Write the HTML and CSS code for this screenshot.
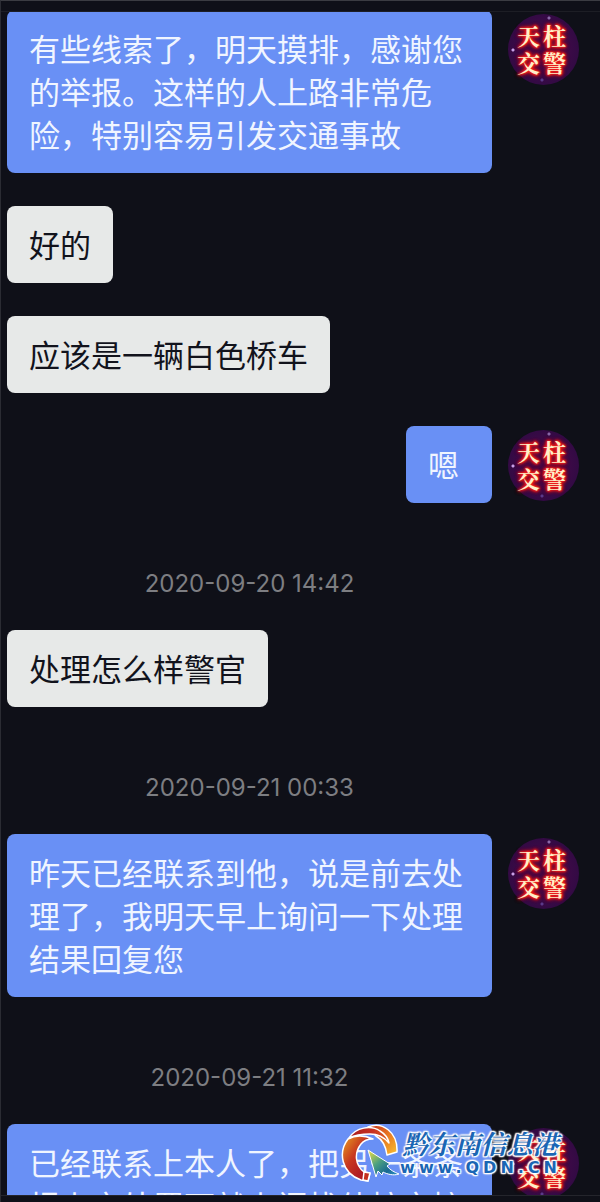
FILE: index.html
```html
<!DOCTYPE html>
<html lang="zh-CN">
  <head>
    <meta charset="UTF-8" />
    <meta name="viewport" content="width=device-width, initial-scale=1.0" />
    <title>天柱交警</title>
    <link rel="stylesheet" href="styles.css">
  </head>
  <body>
    <main class="chat">
      <div class="messages">
        <div class="row reply">
          <p class="bubble">有些线索了，明天摸排，感谢您的举报。这样的人上路非常危险，特别容易引发交通事故</p>
          <div class="avatar"><span>天</span><span>柱</span><span>交</span><span>警</span></div>
        </div>
        <div class="row">
          <p class="bubble light">好的</p>
        </div>
        <div class="row">
          <p class="bubble light">应该是一辆白色桥车</p>
        </div>
        <div class="row reply">
          <p class="bubble">嗯</p>
          <div class="avatar"><span>天</span><span>柱</span><span>交</span><span>警</span></div>
        </div>
        <time class="date">2020-09-20 14:42</time>
        <div class="row">
          <p class="bubble light">处理怎么样警官</p>
        </div>
        <time class="date">2020-09-21 00:33</time>
        <div class="row reply">
          <p class="bubble">昨天已经联系到他，说是前去处理了，我明天早上询问一下处理结果回复您</p>
          <div class="avatar"><span>天</span><span>柱</span><span>交</span><span>警</span></div>
        </div>
        <time class="date">2020-09-21 11:32</time>
        <div class="row reply">
          <p class="bubble">已经联系上本人了，把另一条条报上交处置下就上门找他核交接</p>
          <div class="avatar"><span>天</span><span>柱</span><span>交</span><span>警</span></div>
        </div>
      </div>
    </main>

    <div class="watermark">
      <svg class="logo" viewBox="0 0 60 60" width="60" height="60" aria-hidden="true">
        <defs>
          <linearGradient id="left" x1="0" y1="0" x2="1" y2="1">
            <stop offset="0" stop-color="#e8a020" />
            <stop offset="0.4" stop-color="#c83820" />
            <stop offset="0.7" stop-color="#b01c24" />
          </linearGradient>
          <linearGradient id="top" x1="0" y1="0" x2="1" y2="0">
            <stop offset="0" stop-color="#a81c20" />
            <stop offset="0.6" stop-color="#c83020" />
            <stop offset="1" stop-color="#e06820" />
          </linearGradient>
          <linearGradient id="right" x1="0" y1="0" x2="1" y2="1">
            <stop offset="0" stop-color="#c42c20" />
            <stop offset="0.5" stop-color="#e87820" />
            <stop offset="1" stop-color="#f8c030" />
          </linearGradient>
          <linearGradient id="arrow" x1="0" y1="0" x2="1" y2="1">
            <stop offset="0" stop-color="#f4e040" />
            <stop offset="0.4" stop-color="#4ca080" />
            <stop offset="0.7" stop-color="#186890" />
            <stop offset="1" stop-color="#38a0d8" />
          </linearGradient>
        </defs>
        <g stroke="#fff" stroke-width="1.5" stroke-linejoin="round">
          <path fill="url(#right)" d="M28 4C42 -2 58 9 57 29L47 32C46 24 43 17 36 13Z" />
          <path fill="url(#left)" d="M8 16C-2 29 1 50 21 57L28 58L30 50L24 49C15 42 14 30 21 21C24 17 28 16 33 16C24 12 15 12 8 16Z" />
          <path fill="url(#top)" d="M9 15C16 4 31 2 40 8C45 11 48 15 49 20C44 14 37 11 30 11C22 11 15 12 9 15Z" />
          <path fill="#c43020" d="M24 49L30 50L28 58L23 57Z" />
          <path fill="url(#arrow)" stroke-width="1" d="M28 27L50 41L47 43C50 47 54 49 59 51C53 53 47 51 43 49L42 52L38 48L36 54Z" />
        </g>
      </svg>
      <div class="brand">
        <span class="name">黔东南信息港</span>
        <a class="site" href="#">www.QDN.CN</a>
      </div>
    </div>
  </body>
</html>
```

FILE: styles.css
```css
* {
  box-sizing: border-box;
}
body {
  margin: 0;
  height: 100vh;
  overflow: hidden;
  position: relative;
  background-color: #0f1018;
  border-top: 1px solid #3b3c42;
  border-left: 1px solid #2b2c33;
  font-family: "Noto Sans CJK SC", sans-serif;
  font-size: 31px;
  line-height: 43px;
}
.chat {
  height: calc(100vh - 17px);
  margin-top: 10px;
  overflow: hidden;
  border-top: 1px solid #1d1e25;
  border-bottom: 1px solid #24252c;
}
.messages {
  margin-top: -2px;
  padding: 0 21px 0 6px;
}
.row {
  display: flex;
  align-items: flex-start;
  gap: 16px;
  padding-right: 87px;
  margin-bottom: 33px;
}
.reply {
  justify-content: flex-end;
  padding-right: 0;
}
.bubble {
  margin: 0;
  min-width: 86px;
  padding: 16px 22px 18px;
  border-radius: 8px;
  background-color: #6990f5;
  color: #f0f5ff;
}
.light {
  background-color: #e7e9e8;
  color: #12131c;
}
.avatar {
  flex: none;
  display: grid;
  grid-template-columns: 26px 26px;
  grid-auto-rows: 27px;
  place-content: center;
  width: 71px;
  height: 71px;
  margin-top: 4px;
  padding: 0 4px 2px 0;
  border-radius: 50%;
  background:
    radial-gradient(circle at 41px 4px, #8a68a8 1px, transparent 2px),
    radial-gradient(circle at 5px 36px, #c9a0e8 1px, transparent 2px),
    radial-gradient(circle at 34px 66px, #5a3a8a 1px, transparent 2px),
    radial-gradient(circle, #400a48 40%, #260a40 100%);
  color: #fff0c8;
  font-family: "Noto Serif CJK SC", "Noto Sans CJK SC", serif;
  font-size: 23px;
  font-weight: bold;
  line-height: 27px;
  text-align: center;
  text-shadow: 0 0 2px #f02020, 0 0 2px #f02020, 0 0 3px #f02020, 0 0 3px #e01818, 0 0 4px #e01818, 0 0 4px #d01010, 0 0 5px #d01010;
}
.date {
  display: block;
  margin: 65px 87px 30px 0;
  color: #7d7e82;
  font-family: Inter, sans-serif;
  font-size: 24px;
  line-height: 32px;
  text-align: center;
}
.watermark {
  position: absolute;
  right: 39px;
  bottom: 19px;
  display: flex;
  align-items: center;
}
.brand {
  display: flex;
  flex-direction: column;
  align-items: center;
  color: #1a66b4;
  font-weight: bold;
  text-shadow: 0 0 1px #fff, 0 0 2px #fff, 0 0 2px #fff, 0 0 3px #fff, 0 0 3px #fff, 1px 1px 1px #fff, -1px -1px 1px #fff, 1px -1px 1px #fff, -1px 1px 1px #fff;
}
.name {
  font-family: "Noto Serif CJK SC", "Noto Sans CJK SC", serif;
  font-size: 26px;
  font-style: italic;
  line-height: 30px;
}
.site {
  color: inherit;
  font-family: "DejaVu Sans", sans-serif;
  font-size: 16px;
  line-height: 20px;
  letter-spacing: 4px;
  text-decoration: none;
}
```
